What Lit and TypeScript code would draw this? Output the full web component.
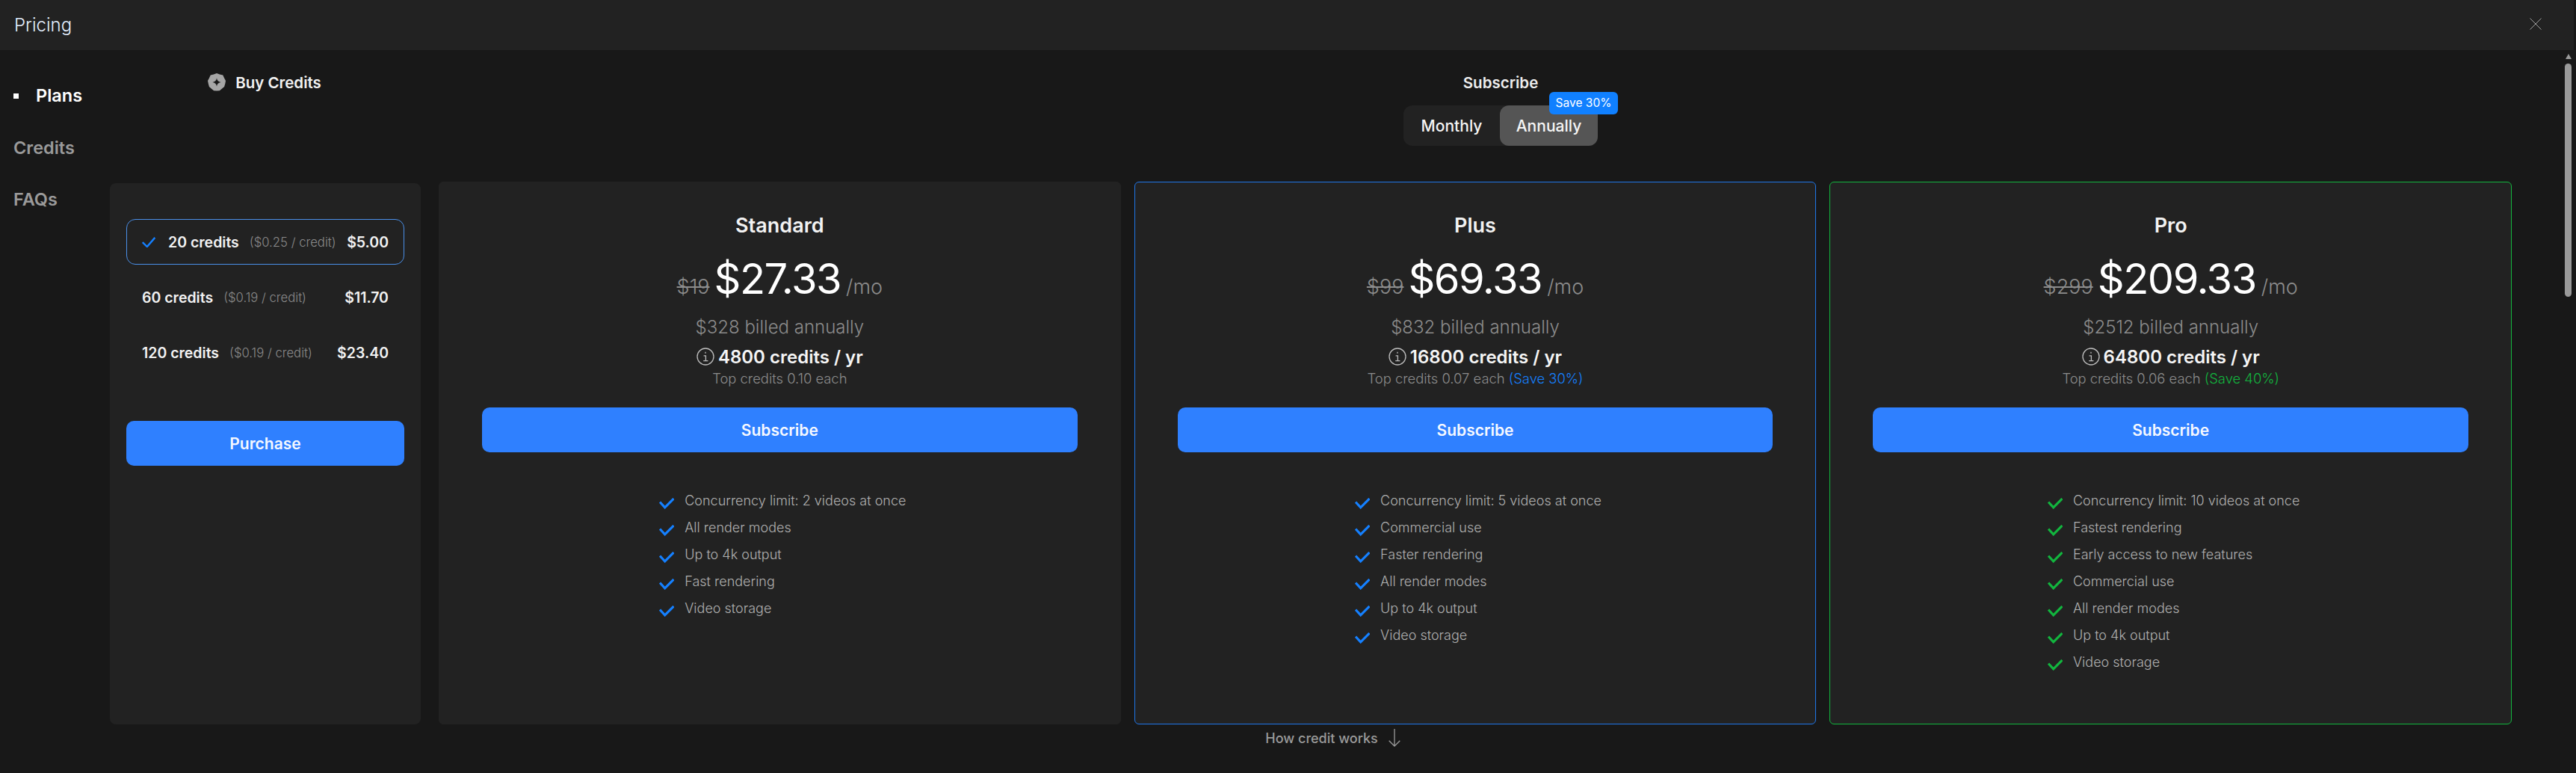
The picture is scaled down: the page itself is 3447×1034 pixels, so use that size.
import { LitElement, css, html, svg } from 'lit'
import { customElement } from 'lit/decorators.js'

interface Plan {
  name: string
  old: string
  price: string
  billed: string
  credits: string
  top: string
  save?: string
  accent?: 'blue' | 'green'
  features: string[]
}

const plans: Plan[] = [
  {
    name: 'Standard',
    old: '$19',
    price: '$27.33',
    billed: '$328 billed annually',
    credits: '4800 credits / yr',
    top: 'Top credits 0.10 each',
    features: [
      'Concurrency limit: 2 videos at once',
      'All render modes',
      'Up to 4k output',
      'Fast rendering',
      'Video storage',
    ],
  },
  {
    name: 'Plus',
    old: '$99',
    price: '$69.33',
    billed: '$832 billed annually',
    credits: '16800 credits / yr',
    top: 'Top credits 0.07 each',
    save: '(Save 30%)',
    accent: 'blue',
    features: [
      'Concurrency limit: 5 videos at once',
      'Commercial use',
      'Faster rendering',
      'All render modes',
      'Up to 4k output',
      'Video storage',
    ],
  },
  {
    name: 'Pro',
    old: '$299',
    price: '$209.33',
    billed: '$2512 billed annually',
    credits: '64800 credits / yr',
    top: 'Top credits 0.06 each',
    save: '(Save 40%)',
    accent: 'green',
    features: [
      'Concurrency limit: 10 videos at once',
      'Fastest rendering',
      'Early access to new features',
      'Commercial use',
      'All render modes',
      'Up to 4k output',
      'Video storage',
    ],
  },
]

const packs = [
  { credits: '20 credits', rate: '($0.25 / credit)', price: '$5.00', selected: true },
  { credits: '60 credits', rate: '($0.19 / credit)', price: '$11.70', selected: false },
  { credits: '120 credits', rate: '($0.19 / credit)', price: '$23.40', selected: false },
]

const check = svg`<path d="M1 5.500 L7.700 12.800 L19.500 1" fill="none" stroke="currentColor" stroke-width="3.200"/>`

@customElement('app-root')
export class AppRoot extends LitElement {
  private renderPlan(p: Plan) {
    return html`
      <section class="card ${p.accent ?? ''}">
        <h2>${p.name}</h2>
        <div class="price">
          <s>${p.old}</s>
          <strong>${p.price}</strong>
          <span>/mo</span>
        </div>
        <div class="billed">${p.billed}</div>
        <div class="credits">
          <svg class="info" viewBox="0 0 24 24" width="24" height="24">
            <circle cx="12" cy="12" r="11" fill="none" stroke="#bdbdbd" stroke-width="1.300" />
            <path d="M12 5.800v2M9.600 10.800H12.400V17.600M9.200 17.600H15.400" fill="none" stroke="#bdbdbd" stroke-width="1.300" />
          </svg>
          <span>${p.credits}</span>
        </div>
        <div class="top">${p.top}${p.save ? html` <em>${p.save}</em>` : ''}</div>
        <button class="cta">Subscribe</button>
        <ul>
          ${p.features.map(
            (f) => html`
              <li>
                <svg viewBox="0 0 20 15" width="20" height="15">${check}</svg>
                <span>${f}</span>
              </li>
            `,
          )}
        </ul>
      </section>
    `
  }

  protected render() {
    return html`
      <header>
        <span class="title">Pricing</span>
        <svg class="close" viewBox="0 0 16 16" width="16" height="16">
          <path d="M.5.5l15 15M15.500.5l-15 15" stroke="#a0a0a0" stroke-width="1" fill="none" />
        </svg>
      </header>
      <div class="body">
        <nav>
          <a class="active"><i></i>Plans</a>
          <a>Credits</a>
          <a>FAQs</a>
        </nav>
        <main>
          <div class="buy">
            <svg viewBox="0 0 24 24" width="24" height="24">
              <path
                fill="#a6a6a6"
                d="M12 0l4 1.600 4.300.9 1.800 4 1.900 3.500-.7 4-1.200 3.900-3.200 2.800-3.100 2.600-3.800.2-3.900-.3-3.100-2.500-3.100-2.800-1.100-3.900-.8-4 1.900-3.500 1.800-4 4.300-.9z"
              />
              <path fill="#181818" d="M12 6.500c.6 3.300 2.200 4.900 5.500 5.500-3.300.6-4.900 2.200-5.500 5.500-.6-3.300-2.200-4.900-5.500-5.500 3.300-.6 4.900-2.200 5.500-5.500z" />
            </svg>
            <span>Buy Credits</span>
          </div>
          <div class="mode">
            <div class="mode-title">Subscribe</div>
            <div class="toggle">
              <span class="seg">Monthly</span>
              <span class="seg on">Annually</span>
              <b class="badge">Save 30%</b>
            </div>
          </div>
          <aside class="panel">
            ${packs.map(
              (k) => html`
                <div class="pack ${k.selected ? 'selected' : ''}">
                  ${k.selected
                    ? html`<svg viewBox="0 0 18 14" width="18" height="14">
                        <path d="M.8 7l6 6L17.300.9" fill="none" stroke="#1580ff" stroke-width="2.400" />
                      </svg>`
                    : ''}
                  <b>${k.credits}</b>
                  <span class="rate">${k.rate}</span>
                  <b class="amount">${k.price}</b>
                </div>
              `,
            )}
            <button class="cta purchase">Purchase</button>
          </aside>
          <div class="plans">${plans.map((p) => this.renderPlan(p))}</div>
          <div class="how">
            <span>How credit works</span>
            <svg viewBox="0 0 16 24" width="16" height="24">
              <path d="M8 0v23M.7 15.700L8 23l7.300-7.300" fill="none" stroke="#9a9a9a" stroke-width="1.300" />
            </svg>
          </div>
        </main>
        <div class="scrollbar">
          <div class="arrow"></div>
          <div class="thumb"></div>
        </div>
      </div>
    `
  }

  static styles = css`
    :host {
      display: block;
      width: 100%;
      height: 100vh;
      overflow: hidden;
      background: #181818;
      color: #fff;
      font-family: Inter, 'Liberation Sans', sans-serif;
    }
    * {
      box-sizing: border-box;
    }
    header {
      height: 67px;
      width: 3444px;
      background: #222;
      display: flex;
      align-items: center;
      justify-content: space-between;
      padding: 0 43px 0 19px;
    }
    .title {
      font-size: 24px;
      font-weight: 300;
      color: #e4efff;
    }
    .close {
      margin-top: -4px;
    }
    .body {
      display: flex;
      width: 3444px;
    }
    nav {
      width: 147px;
      flex: none;
      display: flex;
      flex-direction: column;
      gap: 39.500px;
      padding: 46px 0 0 18px;
    }
    nav a {
      display: flex;
      align-items: center;
      font-size: 23.500px;
      line-height: 30px;
      font-weight: 600;
      color: #9a9a9a;
    }
    nav a.active {
      color: #fff;
    }
    nav i {
      width: 7px;
      height: 7px;
      background: #fff;
      margin-right: 23px;
    }
    main {
      flex: 1;
      display: grid;
      grid-template-columns: 416px 1fr;
      grid-template-rows: 176px auto auto;
      column-gap: 24px;
    }
    .buy {
      display: flex;
      justify-content: center;
      align-items: center;
      gap: 13px;
      height: 24px;
      margin-top: 31px;
      font-size: 20.500px;
      font-weight: 600;
      color: #f2f2f2;
      padding-right: 2px;
    }
    .mode {
      display: flex;
      flex-direction: column;
      align-items: center;
      padding-top: 30px;
    }
    .mode-title {
      font-size: 20.500px;
      line-height: 28px;
      font-weight: 600;
      color: #eee;
    }
    .toggle {
      position: relative;
      display: flex;
      margin-top: 16px;
      height: 54px;
      background: #222;
      border-radius: 12px;
    }
    .seg {
      display: flex;
      align-items: center;
      justify-content: center;
      font-size: 21px;
      font-weight: 500;
      color: #f5f5f5;
      width: 129px;
      border-radius: 12px;
    }
    .seg.on {
      width: 131px;
      background: #555;
    }
    .badge {
      position: absolute;
      left: 195px;
      top: -18px;
      width: 92px;
      height: 30px;
      background: #1080ff;
      border-radius: 6px;
      font-size: 15.500px;
      font-weight: 400;
      line-height: 30px;
      text-align: center;
      color: #fff;
    }
    .panel {
      margin-top: 2px;
      height: 724px;
      background: #222;
      border-radius: 8px;
      padding: 48px 22px 0;
    }
    .pack {
      display: flex;
      align-items: center;
      height: 61px;
      margin-bottom: 13px;
      padding: 0 20px;
      border: 1.500px solid transparent;
      border-radius: 12px;
      font-size: 19.500px;
      color: #f2f2f2;
    }
    .pack.selected {
      border-color: #4a8fe8;
    }
    .pack svg {
      margin-right: 17px;
    }
    .pack b {
      font-weight: 600;
    }
    .rate {
      margin-left: 14px;
      font-size: 16.700px;
      font-weight: 300;
      color: #8a8a8a;
    }
    .pack .amount {
      margin-left: auto;
    }
    .cta {
      display: block;
      width: 100%;
      height: 60px;
      border: 0;
      border-radius: 10px;
      background: #2f80ff;
      color: #f5f8ff;
      font: 600 21px Inter, 'Liberation Sans', sans-serif;
    }
    .purchase {
      margin-top: 61px;
    }
    .plans {
      display: grid;
      grid-template-columns: repeat(3, 1fr);
      gap: 18px;
      width: 2774px;
    }
    .card {
      height: 726px;
      background: #222;
      border: 1px solid #222;
      border-radius: 6px;
      padding: 41px 57px 0;
      text-align: center;
    }
    .card.blue {
      border-color: #1f76e8;
    }
    .card.green {
      border-color: #12b53e;
    }
    h2 {
      margin: 0;
      font-size: 27px;
      line-height: 34px;
      font-weight: 600;
      color: #f2f2f2;
    }
    .price {
      display: flex;
      justify-content: center;
      align-items: baseline;
      margin-top: 20px;
      height: 68px;
    }
    .price strong {
      font-size: 56px;
      line-height: 68px;
      font-weight: 400;
      letter-spacing: -1.500px;
      color: #fff;
      margin: 0 7px 0 6px;
    }
    .price s,
    .price span {
      font-size: 27px;
      font-weight: 300;
      color: #8c8c8c;
    }
    .billed {
      margin-top: 16px;
      font-size: 24px;
      line-height: 30px;
      font-weight: 300;
      color: #8c8c8c;
    }
    .credits {
      display: flex;
      justify-content: center;
      align-items: center;
      gap: 5px;
      margin-top: 8px;
      height: 32px;
      font-size: 24px;
      font-weight: 600;
      color: #f5f5f5;
    }
    .top {
      margin-top: 2px;
      font-size: 18.400px;
      line-height: 22px;
      font-weight: 300;
      color: #8c8c8c;
    }
    .top em {
      font-style: normal;
      color: #1580ff;
    }
    .green .top em {
      color: #12b53e;
    }
    .card .cta {
      margin-top: 28px;
    }
    ul {
      list-style: none;
      margin: 46px 0 0;
      padding: 0 0 0 8px;
      display: inline-flex;
      flex-direction: column;
      text-align: left;
    }
    li {
      display: flex;
      align-items: center;
      height: 36px;
      gap: 14px;
      font-size: 18px;
      font-weight: 300;
      color: #b0b0b0;
    }
    li svg {
      flex: none;
      margin-top: 8px;
      color: #1580ff;
    }
    .green li svg {
      color: #12b53e;
    }
    .how {
      grid-column: 1 / -1;
      display: flex;
      justify-content: center;
      align-items: center;
      gap: 14px;
      padding-right: 9px;
      margin-top: 6px;
      font-size: 18px;
      font-weight: 500;
      color: #9a9a9a;
    }
    .scrollbar {
      width: 15px;
      flex: none;
      display: flex;
      flex-direction: column;
      align-items: center;
      padding-top: 5px;
    }
    .arrow {
      width: 0;
      height: 0;
      border-left: 4.500px solid transparent;
      border-right: 4.500px solid transparent;
      border-bottom: 7px solid #9a9a9a;
    }
    .thumb {
      width: 9px;
      height: 312px;
      margin-top: 6px;
      border-radius: 5px;
      background: #9a9a9a;
    }
  `
}

declare global {
  interface HTMLElementTagNameMap {
    'app-root': AppRoot
  }
}
